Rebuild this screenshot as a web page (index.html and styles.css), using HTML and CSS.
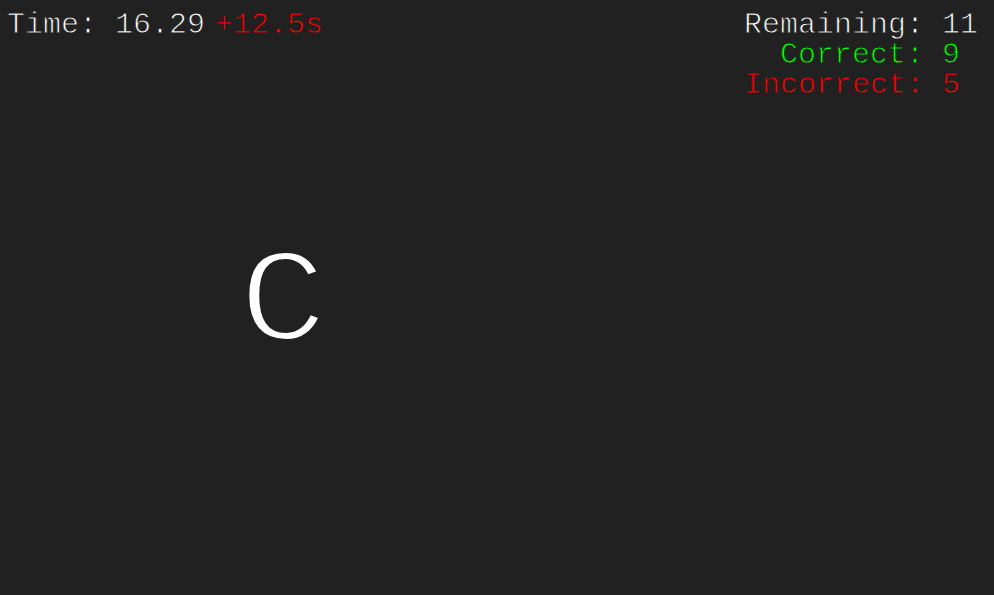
FILE: index.html
```html
<!DOCTYPE html>
<html>
<head>
<meta charset="utf-8">
<link rel="stylesheet" href="styles.css">
</head>
<body>
<div class="hud">
  <div class="timer"><span>Time: 16.29</span><span class="penalty">+12.5s</span></div>
  <div class="stats">
    <span class="label">Remaining:</span><span class="value">11</span>
    <span class="label correct">Correct:</span><span class="value correct">9</span>
    <span class="label incorrect">Incorrect:</span><span class="value incorrect">5</span>
  </div>
</div>
<div class="letter">C</div>
</body>
</html>
```
FILE: styles.css
```css
html, body {
  margin: 0;
  height: 100%;
  background: #212121;
  color: #ffffff;
  font-family: "Liberation Mono", "Courier New", monospace;
  overflow: hidden;
}
.hud {
  display: flex;
  justify-content: space-between;
  align-items: flex-start;
  padding: 10px 16px 0 7px;
  font-size: 30px;
  line-height: 30px;
  -webkit-text-stroke: 0.9px #212121;
}
.timer {
  display: flex;
  gap: 10px;
}
.penalty { color: #ff0000; }
.stats {
  display: grid;
  grid-template-columns: auto auto;
  column-gap: 18px;
}
.label { text-align: right; }
.value { text-align: left; min-width: 36px; }
.correct { color: #00ff00; }
.incorrect { color: #ff0000; }
.letter {
  position: absolute;
  left: 239px;
  top: 240px;
  font-size: 131px;
  line-height: 131px;
  -webkit-text-stroke: 4px #212121;
  transform: scaleX(1.12);
  transform-origin: 0 0;
}
```
